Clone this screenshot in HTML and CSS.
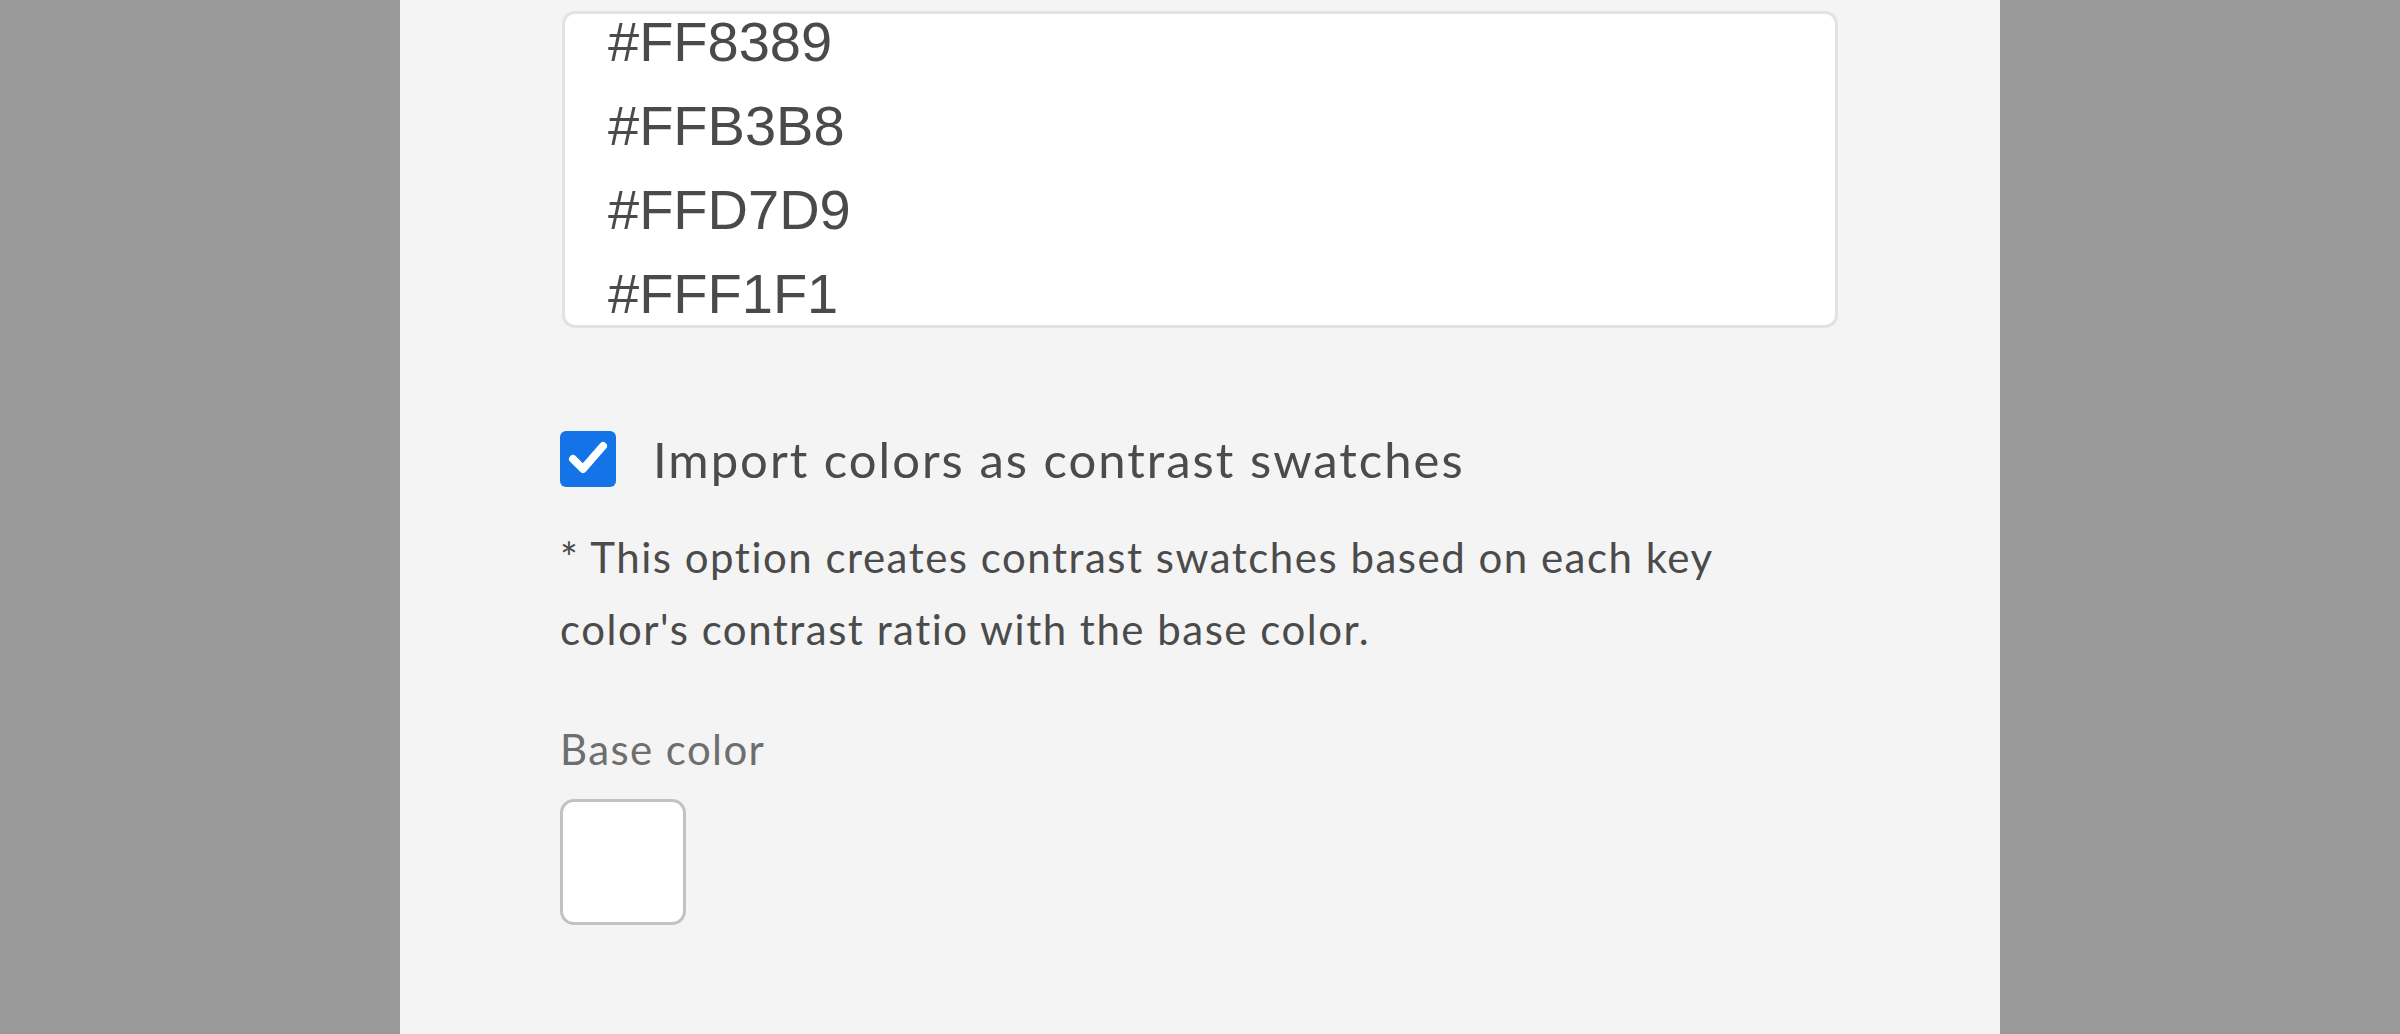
FILE: index.html
```html
<!DOCTYPE HTML><html>
<head>
  <title>Import colors</title>
  <meta name="viewport" content="width=device-width, initial-scale=1">
  <link rel="stylesheet" href="styles.css">
</head>
<body>
  <div class="panel">
    <div class="keys">
      <div class="keys-list">
        <div>#FF8389</div>
        <div>#FFB3B8</div>
        <div>#FFD7D9</div>
        <div>#FFF1F1</div>
      </div>
    </div>
    <label class="option">
      <span class="checkbox">
        <svg width="56" height="56" viewBox="0 0 56 56">
          <path d="M13 28 L23 38 L43 15" fill="none" stroke="#fff" stroke-width="8" stroke-linecap="round" stroke-linejoin="round"/>
        </svg>
      </span>
      <span class="option-text">Import colors as contrast swatches</span>
    </label>
    <p class="note">* This option creates contrast swatches based on each key<br>color's contrast ratio with the base color.</p>
    <div class="field-label">Base color</div>
    <div class="swatch"></div>
  </div>
</body>
</html>
```

FILE: styles.css
```css
html {
  font-family: Lato, "Open Sans", sans-serif;
}
body {
  margin: 0;
  background-color: #999999;
}
.panel {
  box-sizing: border-box;
  width: 1600px;
  min-height: 100vh;
  margin: 0 auto;
  padding: 11px 160px 0;
  background-color: #f4f4f4;
}
.keys {
  height: 317px;
  box-sizing: border-box;
  margin: 0 2px;
  padding: 0 43px;
  background-color: #fff;
  border: 3px solid #e2e2e2;
  border-radius: 13px;
  overflow: hidden;
}
.keys-list {
  margin-top: -14px;
  font-family: "Liberation Sans", Arial, sans-serif;
  font-size: 56px;
  line-height: 84px;
  color: #4a4a4a;
}
.option {
  display: flex;
  align-items: center;
  gap: 37px;
  margin-top: 103px;
}
.checkbox {
  display: flex;
  width: 56px;
  height: 56px;
  border-radius: 6px;
  background-color: #1473e6;
}
.option-text {
  font-size: 49px;
  line-height: 56px;
  letter-spacing: 2px;
  color: #4b4b4b;
}
.note {
  margin: 34px 0 0;
  font-size: 42px;
  line-height: 72px;
  letter-spacing: 1.5px;
  color: #4b4b4b;
}
.field-label {
  margin-top: 48px;
  font-size: 42px;
  line-height: 72px;
  letter-spacing: 1.4px;
  color: #6e6e6e;
}
.swatch {
  box-sizing: border-box;
  width: 126px;
  height: 126px;
  margin-top: 14px;
  background-color: #fff;
  border: 3px solid #c2c2c2;
  border-radius: 14px;
}
```
